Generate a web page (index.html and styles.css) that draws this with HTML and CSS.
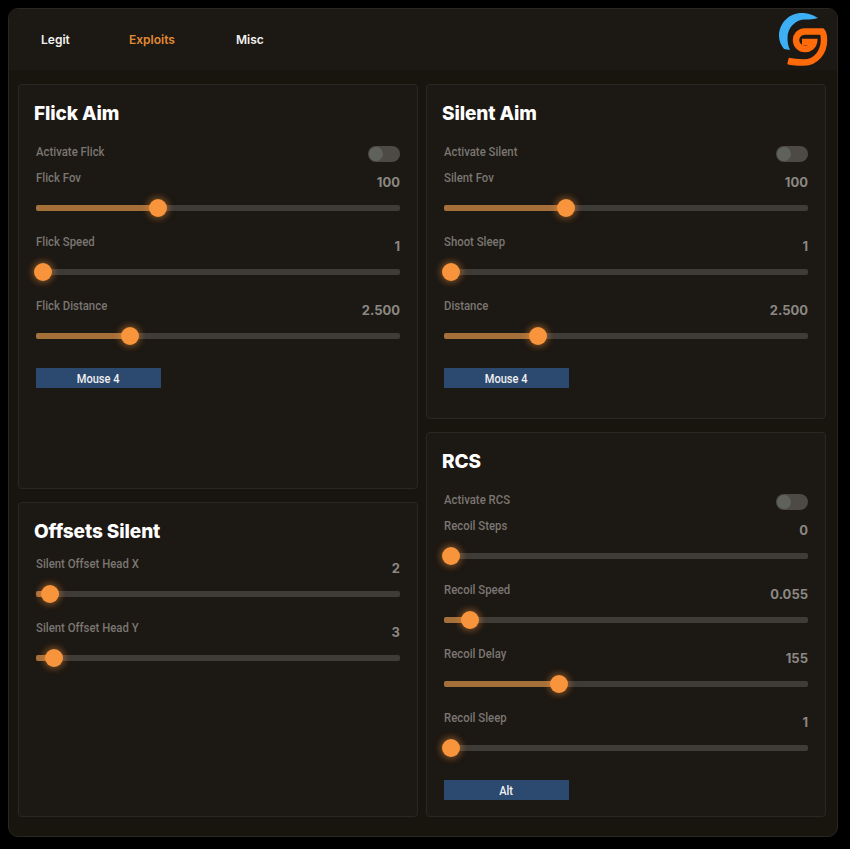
FILE: index.html
```html
<!DOCTYPE html>
<html lang="en">
<head>
    <meta charset="UTF-8">
    <meta name="viewport" content="width=device-width, initial-scale=1.0">
    <link rel="stylesheet" href="styles.css">
    <title>Menu</title>
</head>
<body>
    <div class="app">
        <header class="topbar">
            <nav class="tabs">
                <a href="#" class="tab">Legit</a>
                <a href="#" class="tab active">Exploits</a>
                <a href="#" class="tab">Misc</a>
            </nav>
            <svg class="logo" width="50" height="54" viewBox="0 0 50 54" fill="none">
                <path d="M40 6 C34 2 28 1 24 1 C11 1 1 11 1 24 C1 29 3 33 6 37 L12 38 C10 34 9.5 30 9.5 26 C9.5 15 18 7.5 27 7.5 C32 7.5 36 7 40 6 Z" fill="#3db0f5"/>
                <path d="M10 49 C16 50.5 22 50.5 26 50.5 C38 50.5 46 40 46 28 C46 24 45.5 21 44 19.5 H27 C21 19.5 18 24 18 28 C18 33 22 37 27 37 C32 37 35.5 34 36 30 H24" stroke="#ff6a0a" stroke-width="6.5"/>
            </svg>
        </header>
        <main class="columns">
            <div class="col">
                <section class="card flick">
                    <h2>Flick Aim</h2>
                    <div class="toggle-row"><span class="label">Activate Flick</span><span class="toggle"><i></i></span></div>
                    <div class="slider-row">
                        <div class="slider-head"><span class="label">Flick Fov</span><span class="value">100</span></div>
                        <div class="track"><div class="fill" style="width:122px"><span class="thumb"></span></div></div>
                    </div>
                    <div class="slider-row">
                        <div class="slider-head"><span class="label">Flick Speed</span><span class="value">1</span></div>
                        <div class="track"><div class="fill" style="width:7px"><span class="thumb"></span></div></div>
                    </div>
                    <div class="slider-row">
                        <div class="slider-head"><span class="label">Flick Distance</span><span class="value">2.500</span></div>
                        <div class="track"><div class="fill" style="width:94px"><span class="thumb"></span></div></div>
                    </div>
                    <button class="bind"><span>Mouse 4</span></button>
                </section>
                <section class="card offsets">
                    <h2>Offsets Silent</h2>
                    <div class="slider-row">
                        <div class="slider-head"><span class="label">Silent Offset Head X</span><span class="value">2</span></div>
                        <div class="track"><div class="fill" style="width:14px"><span class="thumb"></span></div></div>
                    </div>
                    <div class="slider-row">
                        <div class="slider-head"><span class="label">Silent Offset Head Y</span><span class="value">3</span></div>
                        <div class="track"><div class="fill" style="width:18px"><span class="thumb"></span></div></div>
                    </div>
                </section>
            </div>
            <div class="col">
                <section class="card silent">
                    <h2>Silent Aim</h2>
                    <div class="toggle-row"><span class="label">Activate Silent</span><span class="toggle"><i></i></span></div>
                    <div class="slider-row">
                        <div class="slider-head"><span class="label">Silent Fov</span><span class="value">100</span></div>
                        <div class="track"><div class="fill" style="width:122px"><span class="thumb"></span></div></div>
                    </div>
                    <div class="slider-row">
                        <div class="slider-head"><span class="label">Shoot Sleep</span><span class="value">1</span></div>
                        <div class="track"><div class="fill" style="width:7px"><span class="thumb"></span></div></div>
                    </div>
                    <div class="slider-row">
                        <div class="slider-head"><span class="label">Distance</span><span class="value">2.500</span></div>
                        <div class="track"><div class="fill" style="width:94px"><span class="thumb"></span></div></div>
                    </div>
                    <button class="bind"><span>Mouse 4</span></button>
                </section>
                <section class="card rcs">
                    <h2>RCS</h2>
                    <div class="toggle-row"><span class="label">Activate RCS</span><span class="toggle"><i></i></span></div>
                    <div class="slider-row">
                        <div class="slider-head"><span class="label">Recoil Steps</span><span class="value">0</span></div>
                        <div class="track"><div class="fill" style="width:7px"><span class="thumb"></span></div></div>
                    </div>
                    <div class="slider-row">
                        <div class="slider-head"><span class="label">Recoil Speed</span><span class="value">0.055</span></div>
                        <div class="track"><div class="fill" style="width:26px"><span class="thumb"></span></div></div>
                    </div>
                    <div class="slider-row">
                        <div class="slider-head"><span class="label">Recoil Delay</span><span class="value">155</span></div>
                        <div class="track"><div class="fill" style="width:115px"><span class="thumb"></span></div></div>
                    </div>
                    <div class="slider-row">
                        <div class="slider-head"><span class="label">Recoil Sleep</span><span class="value">1</span></div>
                        <div class="track"><div class="fill" style="width:7px"><span class="thumb"></span></div></div>
                    </div>
                    <button class="bind"><span>Alt</span></button>
                </section>
            </div>
        </main>
    </div>
</body>
</html>
```
FILE: styles.css
```css
* {
    margin: 0;
    padding: 0;
    box-sizing: border-box;
}
body {
    background-color: #000;
    padding: 8px 12px 12px 8px;
    font-family: "Roboto", "Liberation Sans", sans-serif;
}
.app {
    height: 829px;
    background-color: #18150f;
    border: 1px solid #2a2722;
    border-radius: 10px;
    overflow: hidden;
}
.topbar {
    height: 61px;
    display: flex;
    justify-content: space-between;
    align-items: flex-start;
    background-color: #1c1813;
}
.tabs {
    display: flex;
    padding: 24px 0 0 32px;
}
.tab {
    color: #f2f2f2;
    text-decoration: none;
    font-family: "Inter", sans-serif;
    font-size: 12px;
    font-weight: 600;
    line-height: 14px;
    width: 88px;
}
.tab:nth-child(2) {
    width: 107px;
}
.tab.active {
    color: #e08a35;
}
.logo {
    margin: 3px 9px 0 0;
}
.columns {
    display: grid;
    grid-template-columns: 400px 400px;
    gap: 8px;
    padding: 14px 9px 0;
}
.col {
    display: flex;
    flex-direction: column;
    gap: 13px;
}
.card {
    background-color: #1c1813;
    border: 1px solid #2a2722;
    border-radius: 4px;
    padding: 0 17px;
}
.flick { height: 405px; }
.offsets { height: 315px; }
.silent { height: 335px; }
.rcs { height: 385px; }
.card h2 {
    color: #fff;
    font-family: "Inter", sans-serif;
    font-size: 19px;
    font-weight: 800;
    letter-spacing: -0.1px;
    line-height: 24px;
    margin: 17px 0 0 -2px;
}
.offsets h2 {
    margin-bottom: 10px;
}
.toggle-row {
    height: 26px;
    margin-top: 16px;
    display: flex;
    justify-content: space-between;
}
.label {
    color: #7a7672;
    font-size: 13px;
    font-weight: 500;
    line-height: 16px;
    display: inline-block;
    transform: scaleX(0.875);
    transform-origin: left;
    white-space: nowrap;
}
.toggle-row .label {
    margin-top: 2px;
}
.toggle {
    width: 32px;
    height: 16px;
    margin-top: 4px;
    background-color: #4d4a46;
    border-radius: 8px;
    padding: 1px;
}
.toggle i {
    display: block;
    width: 14px;
    height: 14px;
    background-color: #5f625c;
    border-radius: 50%;
}
.slider-row {
    height: 64px;
}
.slider-head {
    height: 37px;
    display: flex;
    justify-content: space-between;
}
.slider-head .label {
    margin-top: 2px;
}
.value {
    color: #8b8884;
    font-family: "Inter", sans-serif;
    font-size: 13px;
    font-weight: 700;
    line-height: 16px;
    margin-top: 6px;
}
.track {
    height: 6px;
    background-color: #3f3b37;
    border-radius: 2px;
}
.fill {
    height: 6px;
    background-color: #a56f3a;
    border-radius: 2px;
    position: relative;
}
.thumb {
    position: absolute;
    right: -9px;
    top: -6px;
    width: 18px;
    height: 18px;
    background-color: #f7943c;
    border-radius: 50%;
    box-shadow: 0 0 6px 2px rgba(247, 147, 58, 0.4);
}
.bind {
    display: block;
    width: 125px;
    height: 20px;
    margin-top: 8px;
    border: none;
    background-color: #2c4a70;
    color: #f0f0f0;
    font-family: "Roboto", sans-serif;
    font-size: 13px;
    font-weight: 500;
}
.bind span {
    display: inline-block;
    transform: scaleX(0.85);
}
```
